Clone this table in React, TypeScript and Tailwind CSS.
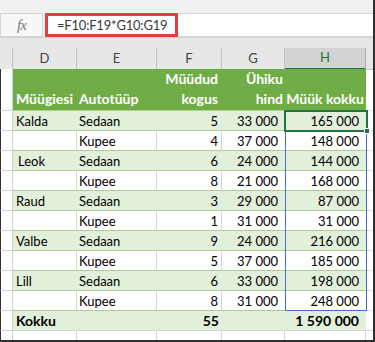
import React from "react";

const cols = "grid grid-cols-[13px_64px_80px_65px_63px_81px_7px]";

type Row = { name: string; type: string; qty: string; price: string; total: string; indent?: boolean };

const rows: Row[] = [
  { name: "Kalda", type: "Sedaan", qty: "5", price: "33 000", total: "165 000" },
  { name: "", type: "Kupee", qty: "4", price: "37 000", total: "148 000" },
  { name: "Leok", type: "Sedaan", qty: "6", price: "24 000", total: "144 000", indent: true },
  { name: "", type: "Kupee", qty: "8", price: "21 000", total: "168 000" },
  { name: "Raud", type: "Sedaan", qty: "3", price: "29 000", total: "87 000" },
  { name: "", type: "Kupee", qty: "1", price: "31 000", total: "31 000" },
  { name: "Valbe", type: "Sedaan", qty: "9", price: "24 000", total: "216 000" },
  { name: "", type: "Kupee", qty: "5", price: "37 000", total: "185 000" },
  { name: "Lill", type: "Sedaan", qty: "6", price: "33 000", total: "198 000" },
  { name: "", type: "Kupee", qty: "8", price: "31 000", total: "248 000" },
];

export default function App() {
  return (
    <div
      className="w-[375px] h-[342px] overflow-hidden bg-white border-r-2 border-b-2 border-[#2f2f2f] text-black"
      style={{ fontFamily: "Lato, 'Open Sans', sans-serif" }}
    >
      {/* Formula bar */}
      <div className="h-[38px] bg-[#f1f1f1] border-b border-[#d0d0d0] pt-[13px]">
        <div className="flex h-[24px]">
          <div className="w-[43px] h-full bg-[#f8f8f8] border border-[#d4d4d4] flex items-center justify-center">
            <span
              className="italic text-[15px] text-[#777] leading-none tracking-[-1px]"
              style={{ fontFamily: "'Liberation Serif', serif" }}
            >
              fx
            </span>
          </div>
          <div className="flex-1 ml-[2px] h-full bg-white border-y border-[#d8d8d8] flex">
            <div className="w-[133px] h-[24px] -mt-px border-[3px] border-[#e2403f] flex items-center pl-[9px] text-[13px] tracking-[-0.2px] text-[#3a3a3a] leading-none whitespace-nowrap">
              =F10:F19*G10:G19
            </div>
          </div>
        </div>
      </div>

      {/* gap */}
      <div className="h-[10px] bg-[#e7e7e7]" />

      {/* Column headers */}
      <div className={`${cols} h-[21px] bg-[#e7e7e7] text-[13px] text-[#444]`}>
        <div className="border-r border-b border-[#c4c4c4]" />
        <div className="border-r border-b border-[#c4c4c4] flex items-center justify-center">D</div>
        <div className="border-r border-b border-[#c4c4c4] flex items-center justify-center">E</div>
        <div className="border-r border-b border-[#c4c4c4] flex items-center justify-center">F</div>
        <div className="border-r border-b border-[#c4c4c4] flex items-center justify-center">G</div>
        <div className="bg-[#d3d3d3] border-r border-[#ababab] border-b-2 border-b-[#217346] text-[#217346] flex items-center justify-center">
          H
        </div>
        <div className="border-b border-[#c4c4c4]" />
      </div>

      {/* Table */}
      <div className="relative">
        {/* green header */}
        <div className={`${cols} h-[41px] text-[14px] font-bold text-white leading-[20px]`}>
          <div className="border-l border-[#2f2f2f] border-r border-r-[#d4d4d4] bg-white" />
          <div className="bg-[#70ad47] flex items-end pl-[3px] pb-[1px] overflow-hidden whitespace-nowrap">
            Müügiesi
          </div>
          <div className="bg-[#70ad47] flex items-end pl-[2px] pb-[1px] whitespace-nowrap">Autotüüp</div>
          <div className="bg-[#70ad47] flex flex-col items-end justify-end pr-[4px] pb-[1px]">
            <span>Müüdud</span>
            <span>kogus</span>
          </div>
          <div className="bg-[#70ad47] flex flex-col items-end justify-end pr-[2px] pb-[1px]">
            <span>Ühiku</span>
            <span>hind</span>
          </div>
          <div className="bg-[#70ad47] flex items-end justify-end pr-[2px] pb-[1px] whitespace-nowrap">
            Müük kokku
          </div>
          <div />
        </div>

        {rows.map((r, i) => {
          const green = i % 2 === 0;
          const fill = green ? "bg-[#e2efda]" : "bg-white";
          const vline = green ? "border-r-transparent" : "border-r-[#d4d4d4]";
          return (
            <div key={i} className={`${cols} h-[20px] text-[13px] leading-[16px]`}>
              <div className="border-l border-[#2f2f2f] border-t border-t-[#d4d4d4] border-r border-r-[#cfcfcf] bg-white" />
              <div className={`${fill} border-t border-t-[#a9d08e] border-r ${vline} flex items-end pl-[3px] pb-[1px]`}>
                <span className={r.indent ? "ml-[2px]" : ""}>{r.name}</span>
              </div>
              <div className={`${fill} border-t border-t-[#a9d08e] border-r ${vline} flex items-end pl-[2px] pb-[1px]`}>
                {r.type}
              </div>
              <div className={`${fill} border-t border-t-[#a9d08e] border-r ${vline} flex items-end justify-end pr-[3px] pb-[1px]`}>
                {r.qty}
              </div>
              <div className={`${fill} border-t border-t-[#a9d08e] flex items-end justify-end pr-[7px] pb-[1px]`}>
                {r.price}
              </div>
              <div className={`${fill} border-t border-t-[#a9d08e] flex items-end justify-end pr-[7px] pb-[1px]`}>
                {r.total}
              </div>
              <div className="border-t border-[#e0e0e0]" />
            </div>
          );
        })}

        {/* Total row */}
        <div className={`${cols} h-[20px] text-[14px] font-bold leading-[16px]`}>
          <div className="border-l border-[#2f2f2f] border-t border-t-[#d4d4d4] border-r border-r-[#cfcfcf] bg-white" />
          <div className="bg-[#e2efda] border-t border-t-[#a9d08e] flex items-end pl-[3px] pb-[1px]">Kokku</div>
          <div className="bg-[#e2efda] border-t border-t-[#a9d08e]" />
          <div className="bg-[#e2efda] border-t border-t-[#a9d08e] flex items-end justify-end pr-[3px] pb-[1px]">55</div>
          <div className="bg-[#e2efda] border-t border-t-[#a9d08e]" />
          <div className="bg-[#e2efda] border-t border-t-[#a9d08e] flex items-end justify-end pr-[7px] pb-[1px] whitespace-nowrap">
            1 590 000
          </div>
          <div className="border-t border-[#e0e0e0]" />
        </div>

        {/* Empty partial row */}
        <div className={`${cols} h-[10px]`}>
          <div className="border-l border-[#2f2f2f] border-t border-t-[#cfcfcf] border-r border-r-[#cfcfcf]" />
          <div className="border-t border-r border-[#d4d4d4]" />
          <div className="border-t border-r border-[#d4d4d4]" />
          <div className="border-t border-r border-[#d4d4d4]" />
          <div className="border-t border-r border-[#d4d4d4]" />
          <div className="border-t border-r border-[#d4d4d4]" />
          <div className="border-t border-[#d4d4d4]" />
        </div>

        {/* Selection range */}
        <div className="absolute left-[285px] top-[41px] w-[82px] h-[201px] border border-[#3f6fc6] pointer-events-none" />
        {/* Active cell */}
        <div className="absolute left-[284px] top-[41px] w-[84px] h-[22px] border-2 border-[#217346] pointer-events-none" />
        {/* Fill handle */}
        <div className="absolute left-[364px] top-[59px] w-[6px] h-[6px] bg-[#217346] border border-white pointer-events-none" />
      </div>
    </div>
  );
}
